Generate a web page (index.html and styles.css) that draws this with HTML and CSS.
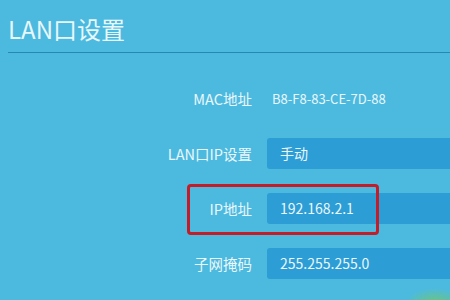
FILE: index.html
```html
<!DOCTYPE html>
<html lang="zh-CN">
<head>
<meta charset="utf-8">
<title>LAN口设置</title>
<link rel="stylesheet" href="styles.css">
</head>
<body>
<div class="page">
  <header class="header">
    <h1 class="title">LAN口设置</h1>
  </header>
  <div class="form">
    <div class="row">
      <span class="label">MAC地址</span>
      <span class="plain">B8-F8-83-CE-7D-88</span>
    </div>
    <div class="row">
      <span class="label">LAN口IP设置</span>
      <span class="field">手动</span>
    </div>
    <div class="row">
      <span class="label">IP地址</span>
      <span class="field">192.168.2.1</span>
      <span class="highlight"></span>
    </div>
    <div class="row">
      <span class="label">子网掩码</span>
      <span class="field">255.255.255.0</span>
    </div>
  </div>
  <span class="glow"></span>
</div>
</body>
</html>
```

FILE: styles.css
```css
html, body {
  margin: 0;
  padding: 0;
  width: 450px;
  height: 300px;
  overflow: hidden;
  background: #4cbadf;
}
body {
  font-family: "Noto Sans CJK SC", "Noto Sans", sans-serif;
  color: #eaf7fc;
}
.page {
  position: relative;
  width: 450px;
  height: 300px;
  overflow: hidden;
}
.header {
  margin-left: 8px;
  padding-top: 13px;
  padding-bottom: 7px;
  border-bottom: 1px solid #2788b3;
}
.title {
  margin: 0;
  font-size: 24px;
  font-weight: normal;
  line-height: 32px;
  color: #e8f7fc;
}
.form {
  margin-top: 30px;
  padding-left: 8px;
  display: flex;
  flex-direction: column;
  gap: 24px;
}
.row {
  position: relative;
  display: grid;
  grid-template-columns: 244px 1fr;
  column-gap: 15px;
  height: 31px;
  align-items: center;
}
.label {
  text-align: right;
  font-size: 14.5px;
  line-height: 31px;
}
.plain {
  font-size: 13px;
  padding-left: 5px;
  line-height: 31px;
}
.field {
  display: block;
  height: 31px;
  line-height: 31px;
  background: #2c9dd5;
  border-radius: 3px 0 0 3px;
  padding-left: 13px;
  font-size: 14px;
}
.highlight {
  position: absolute;
  left: 179px;
  top: -9px;
  width: 192px;
  height: 51px;
  box-sizing: border-box;
  border: 3px solid #c21d28;
  border-radius: 4px;
}
.glow {
  position: absolute;
  left: 405px;
  top: 288px;
  width: 60px;
  height: 30px;
  border-radius: 50%;
  background: radial-gradient(ellipse at center, rgba(120, 200, 90, 0.75) 0%, rgba(120, 200, 90, 0) 70%);
}
```
